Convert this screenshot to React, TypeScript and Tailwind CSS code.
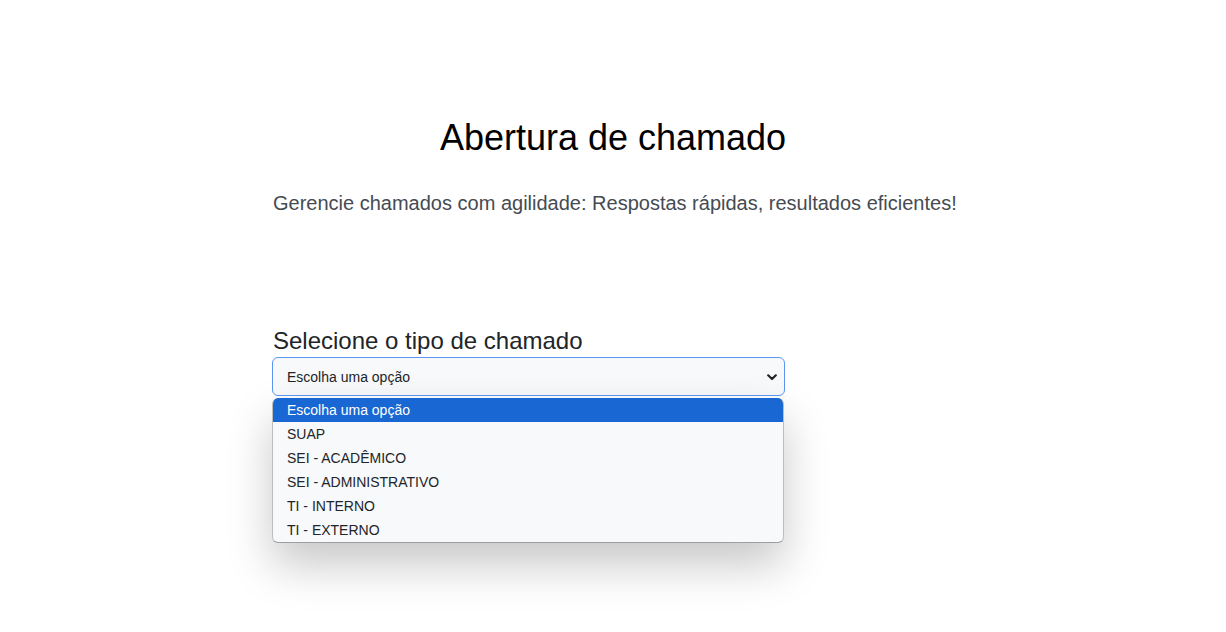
import React from "react";

const options = [
  "Escolha uma opção",
  "SUAP",
  "SEI - ACADÊMICO",
  "SEI - ADMINISTRATIVO",
  "TI - INTERNO",
  "TI - EXTERNO",
];

export default function App() {
  return (
    <div
      className="min-h-[632px] w-full bg-white text-[#212529]"
      style={{ fontFamily: '"Liberation Sans", Arial, sans-serif' }}
    >
      <div className="mx-auto w-[680px] pt-[116px]">
        <h1 className="text-center text-[36px] leading-[43px] text-black">
          Abertura de chamado
        </h1>
        <p className="mt-[29px] text-[20px] leading-[30px] text-[#454b52] whitespace-nowrap">
          Gerencie chamados com agilidade: Respostas rápidas, resultados eficientes!
        </p>
        <div className="mt-[108px] w-[513px] -ml-px">
          <label className="block pl-px text-[24px] leading-[29px] text-[#212529]">
            Selecione o tipo de chamado
          </label>
          <div className="relative mt-[2px]">
            <div className="flex h-[39px] items-center justify-between rounded-[6px] border border-[#5b97f2] bg-[#f8f9fa] pl-[14px] pr-[5px] text-[14px] text-[#212529]">
              <span className="pt-px">Escolha uma opção</span>
              <svg width="10" height="7" viewBox="0 0 10 7" className="mr-[2px] mt-[1px]">
                <path d="M1.2 1.3 L5 5 L8.8 1.3" fill="none" stroke="#212529" strokeWidth="2.2" strokeLinecap="round" strokeLinejoin="round" />
              </svg>
            </div>
            <div className="absolute left-0 top-[41px] w-[512px] overflow-hidden rounded-[6px] border-b border-x border-[#bdbdbd] border-b-[#9e9e9e] bg-[#f8f9fa] shadow-[0_22px_45px_rgba(0,0,0,0.22)]">
              {options.map((o, i) => (
                <div
                  key={o}
                  className={
                    "h-[24px] pl-[14px] text-[14px] leading-[24px] " +
                    (i === 0 ? "bg-[#1967d2] text-white" : "text-[#212529]")
                  }
                >
                  {o}
                </div>
              ))}
            </div>
          </div>
        </div>
      </div>
    </div>
  );
}
